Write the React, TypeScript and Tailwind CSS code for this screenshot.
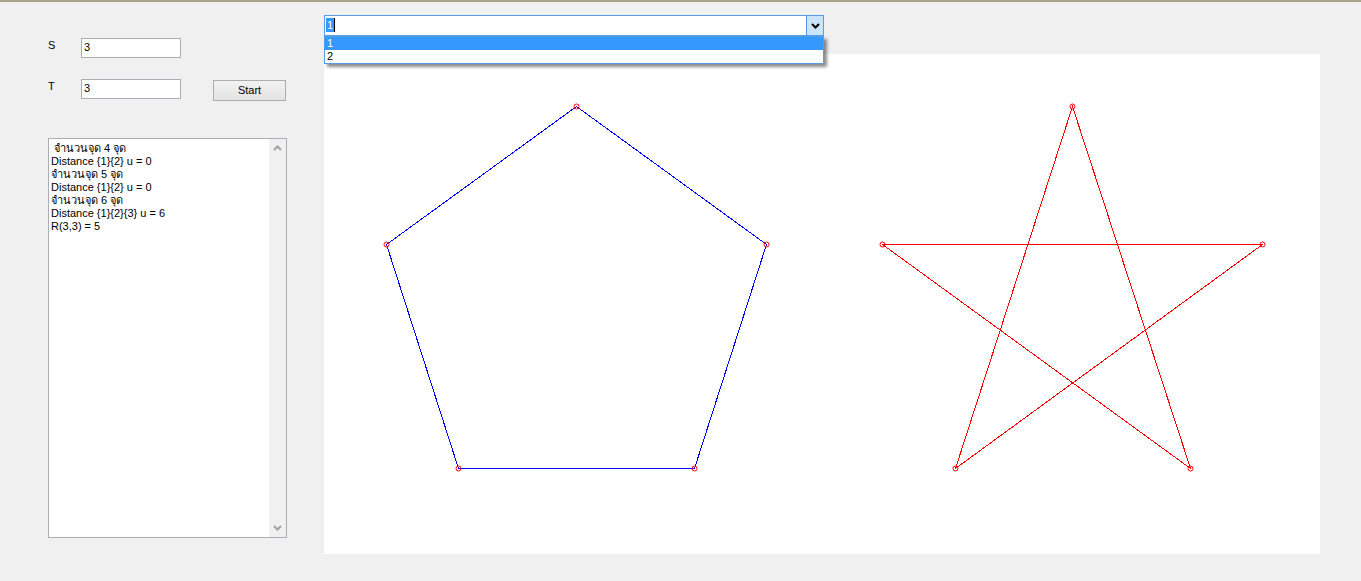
import React from "react";

const font = { fontFamily: '"Liberation Sans", Arial, "Noto Sans", sans-serif' };

function Field({ value }: { value: string }) {
  return (
    <div className="w-[100px] h-[20px] border border-[#abadb3] bg-white pl-[2px] text-[11px] leading-[17px] text-black">
      {value}
    </div>
  );
}

export default function App() {
  const pent = [
    [252, 52],
    [442, 190],
    [370, 414],
    [134, 414],
    [62, 190],
  ];
  const star = [
    [748, 52],
    [866, 414],
    [558, 190],
    [938, 190],
    [631, 414],
  ];
  const pts = (a: number[][]) => a.map((p) => `${p[0] + 0.5},${p[1] + 0.5}`).join(" ");
  const lines = [
    " จำนวนจุด 4 จุด",
    "Distance {1}{2} u = 0",
    "จำนวนจุด 5 จุด",
    "Distance {1}{2} u = 0",
    "จำนวนจุด 6 จุด",
    "Distance {1}{2}{3} u = 6",
    "R(3,3) = 5",
  ];
  return (
    <div
      className="w-[1361px] h-[581px] bg-[#f0f0f0] border-t-2 border-[#a9a18a] flex text-black overflow-hidden"
      style={font}
    >
      {/* left column */}
      <div className="w-[324px] pl-[48px] pt-[36px] flex flex-col">
        <div className="flex h-[20px]">
          <div className="w-[33px] text-[11px] leading-[15px]">S</div>
          <Field value="3" />
        </div>
        <div className="flex h-[21px] mt-[21px]">
          <div className="w-[33px] text-[11px] leading-[15px]">T</div>
          <Field value="3" />
          <div className="ml-[32px] mt-[1px] w-[73px] h-[21px] border border-[#adadad] bg-gradient-to-b from-[#f2f2f2] to-[#e3e3e3] text-[11px] leading-[19px] text-center">
            Start
          </div>
        </div>
        <div className="mt-[38px] w-[239px] h-[400px] border border-[#abadb3] flex">
          <div className="flex-1 bg-white pl-[2px] pt-[3px] text-[11px] leading-[13px] whitespace-pre">
            {lines.map((l, i) => (
              <div key={i}>{l}</div>
            ))}
          </div>
          <div className="w-[17px] bg-[#f0f0f0] flex flex-col justify-between items-center py-[6px]">
            <svg width="9" height="6" viewBox="0 0 9 6">
              <path d="M1 5 L4.5 1.5 L8 5" stroke="#a3a3a3" strokeWidth="2" fill="none" />
            </svg>
            <svg width="9" height="6" viewBox="0 0 9 6">
              <path d="M1 1 L4.5 4.5 L8 1" stroke="#a3a3a3" strokeWidth="2" fill="none" />
            </svg>
          </div>
        </div>
      </div>

      {/* right column */}
      <div className="flex flex-col pt-[13px]">
        <div className="relative w-[500px] h-[21px] z-10">
          <div className="w-full h-full border border-[#569de5] bg-white flex">
            <div className="flex-1 pl-[1px] pt-[2px] flex items-start">
              <span className="bg-[#3399ff] text-white text-[11px] leading-[14px] px-[1px]">1</span>
              <span className="w-[1px] h-[14px] bg-black"></span>
            </div>
            <div className="w-[17px] h-full bg-[#cce4f7] border-l border-[#569de5] flex items-center justify-center">
              <svg width="9" height="6" viewBox="0 0 9 6">
                <path d="M1 1 L4.5 4.5 L8 1" stroke="#000" strokeWidth="2" fill="none" />
              </svg>
            </div>
          </div>
          <div className="absolute left-0 top-[21px] w-[500px] h-[28px] border border-[#569de5] bg-white shadow-[3px_3px_3px_rgba(0,0,0,0.45)] text-[11px] leading-[13px]">
            <div className="bg-[#3399ff] text-white pl-[2px] h-[13px]">1</div>
            <div className="pl-[2px] h-[13px]">2</div>
          </div>
        </div>
        <div className="mt-[18px] w-[996px] h-[500px] bg-white">
          <svg width="996" height="500" viewBox="0 0 996 500">
            <polygon points={pts(pent)} fill="none" stroke="#0000ff" strokeWidth="1" shapeRendering="crispEdges" />
            <polygon points={pts(star)} fill="none" stroke="#ff0000" strokeWidth="1" shapeRendering="crispEdges" />
            {[...pent, ...star].map((p, i) => (
              <circle key={i} cx={p[0] + 0.5} cy={p[1] + 0.5} r="2.5" fill="none" stroke="#ff0000" strokeWidth="1" />
            ))}
          </svg>
        </div>
      </div>
    </div>
  );
}
